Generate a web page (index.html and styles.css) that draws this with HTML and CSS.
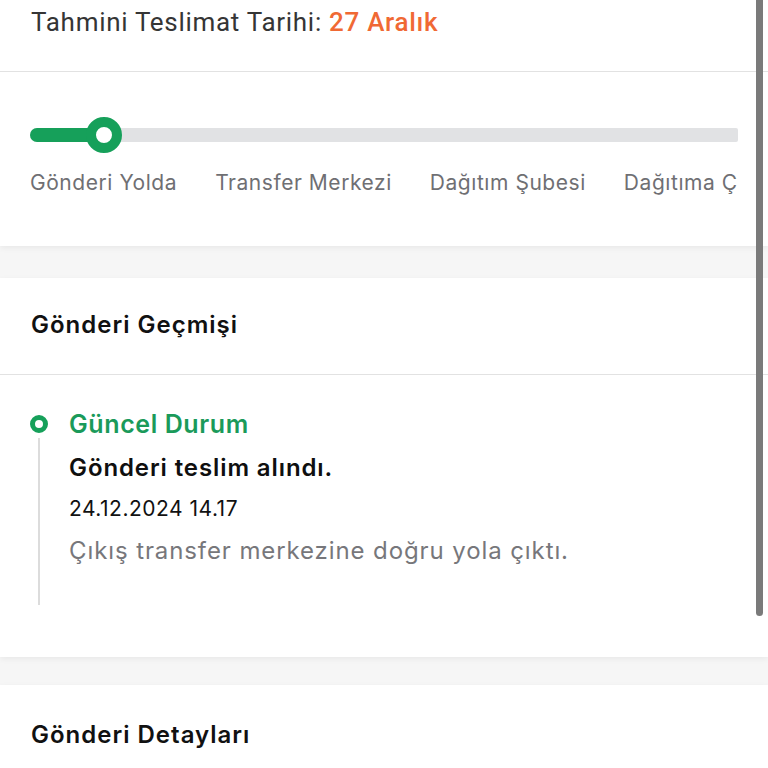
FILE: index.html
```html
<!DOCTYPE html>
<html lang="tr">
<head>
<meta charset="utf-8">
<link rel="stylesheet" href="styles.css">
</head>
<body>
<div class="page">
  <section class="card">
    <div class="eta">Tahmini Teslimat Tarihi: <span class="eta-date">27 Aralık</span></div>
    <div class="progress">
      <div class="track">
        <div class="fill"></div>
        <div class="knob"></div>
      </div>
      <div class="steps">
        <span>Gönderi Yolda</span>
        <span>Transfer Merkezi</span>
        <span>Dağıtım Şubesi</span>
        <span>Dağıtıma Çıktı</span>
      </div>
    </div>
  </section>
  <section class="card history">
    <h2 class="card-title bordered">Gönderi Geçmişi</h2>
    <div class="timeline">
      <div class="event">
        <div class="rail"><span class="dot"></span><span class="line"></span></div>
        <div class="event-body">
          <div class="event-status">Güncel Durum</div>
          <div class="event-title">Gönderi teslim alındı.</div>
          <div class="event-date">24.12.2024 14.17</div>
          <div class="event-desc">Çıkış transfer merkezine doğru yola çıktı.</div>
        </div>
      </div>
    </div>
  </section>
  <section class="card details">
    <h2 class="card-title">Gönderi Detayları</h2>
  </section>
</div>
<div class="scrollbar"></div>
</body>
</html>
```
FILE: styles.css
```css
* { box-sizing: border-box; margin: 0; padding: 0; }
html, body { height: 100%; overflow: hidden; }
body {
  background: #f6f6f6;
  font-family: Inter, "Noto Sans", sans-serif;
  color: #111;
}
.page {
  display: flex;
  flex-direction: column;
}
.card {
  background: #fff;
  box-shadow: 0 2px 6px rgba(0,0,0,0.06);
}
.history { height: 379px; margin-top: 32px; }
.details { height: 120px; margin-top: 28px; }
.eta {
  height: 72px;
  padding: 4px 0 0 31px;
  border-bottom: 1px solid #e2e2e2;
  font-family: Roboto, "Liberation Sans", sans-serif;
  font-size: 26px;
  letter-spacing: 0.7px;
  color: #353535;
  line-height: 36px;
}
.eta-date { color: #f06934; font-weight: 500; }
.progress {
  height: 174px;
  padding: 56px 30px 0 30px;
}
.track {
  position: relative;
  height: 14px;
  background: #e1e2e4;
  border-radius: 7px 2px 2px 7px;
}
.fill {
  width: 76px;
  height: 14px;
  background: #16a05a;
  border-radius: 7px;
}
.knob {
  position: absolute;
  left: 56px;
  top: -11px;
  width: 36px;
  height: 36px;
  border-radius: 50%;
  border: 10px solid #16a05a;
  background: #fff;
}
.steps {
  display: flex;
  gap: 38px;
  margin-top: 26px;
  white-space: nowrap;
  overflow: hidden;
  font-size: 21px;
  letter-spacing: 0.55px;
  color: #6f6f73;
  line-height: 30px;
}
.card-title {
  font-size: 24px;
  letter-spacing: 1px;
  font-weight: 600;
  color: #111;
  padding: 30px 31px 0;
  line-height: 34px;
}
.card-title.bordered {
  height: 97px;
  border-bottom: 1px solid #e2e2e2;
}
.timeline { padding: 35px 30px 0 30px; }
.event { display: flex; gap: 21px; }
.rail {
  display: flex;
  flex-direction: column;
  align-items: center;
  width: 18px;
}
.dot {
  width: 18px;
  height: 18px;
  border-radius: 50%;
  border: 5px solid #16a05a;
  background: #fff;
  margin-top: 5px;
}
.line {
  width: 2px;
  height: 167px;
  background: #dcdcdc;
  margin-top: 5px;
}
.event-status {
  font-size: 25px;
  letter-spacing: 0.6px;
  font-weight: 600;
  color: #1a9a5a;
  line-height: 28px;
}
.event-title {
  margin-top: 16px;
  font-size: 24px;
  letter-spacing: 0.9px;
  font-weight: 600;
  color: #0f0f0f;
  line-height: 28px;
}
.event-date {
  margin-top: 13px;
  font-size: 21px;
  letter-spacing: 0.5px;
  color: #111;
  line-height: 28px;
}
.event-desc {
  margin-top: 14px;
  font-size: 24px;
  letter-spacing: 0.9px;
  color: #77777b;
  line-height: 28px;
}
.details .card-title { padding-top: 33px; }
.scrollbar {
  position: fixed;
  top: 0;
  left: 756px;
  width: 7px;
  height: 616px;
  background: #7a7a7a;
  border-radius: 0 0 4px 4px;
}
```
